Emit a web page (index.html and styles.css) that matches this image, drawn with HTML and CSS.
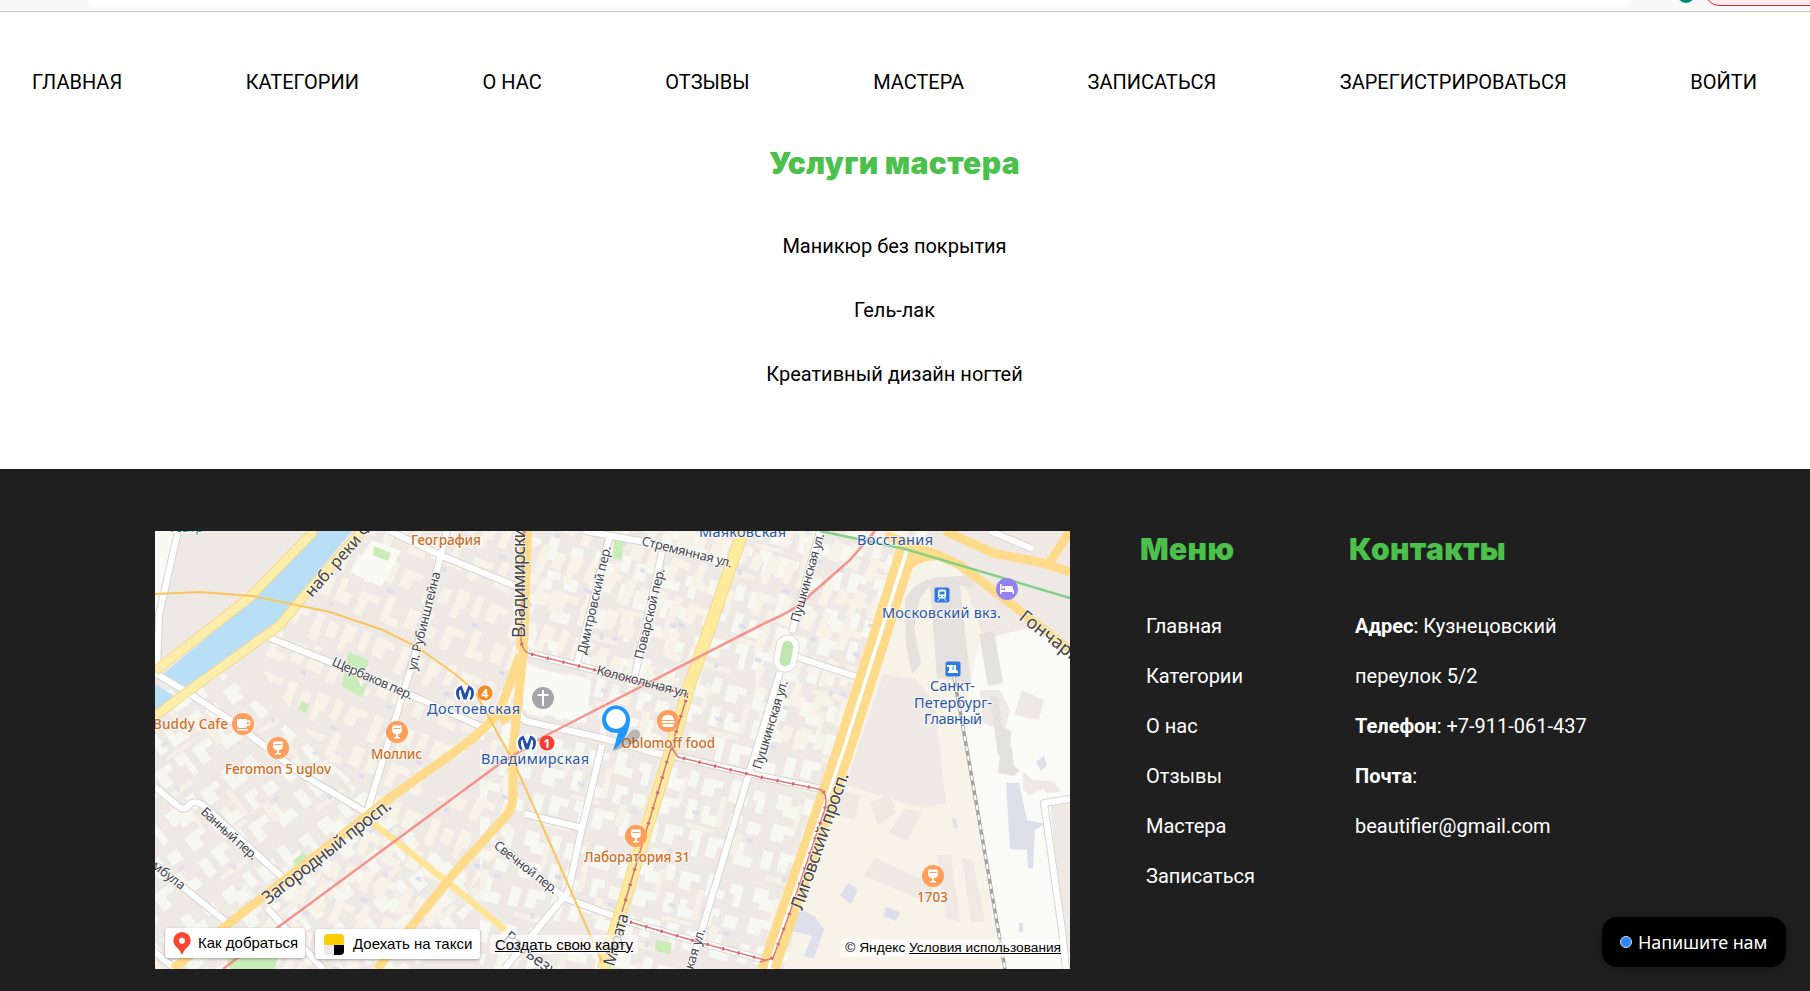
FILE: index.html
```html
<!DOCTYPE html>
<html lang="ru">
<head>
<meta charset="utf-8">
<title>Услуги мастера</title>
<link rel="stylesheet" href="styles.css">
</head>
<body>
<div class="toolbar"><div class="address"></div><div class="avatar"></div><div class="update"></div></div>
<nav class="nav">
<a>Главная</a><a>Категории</a><a>О нас</a><a>Отзывы</a><a>Мастера</a><a>Записаться</a><a>Зарегистрироваться</a><a>Войти</a>
</nav>
<main class="services">
<h1 class="title title-page">Услуги мастера</h1>
<p>Маникюр без покрытия</p>
<p>Гель-лак</p>
<p>Креативный дизайн ногтей</p>
</main>
<footer class="footer">
<div class="map">
<svg class="map-canvas" viewBox="155 531 915 438" width="915" height="438">
<defs>
<pattern id="yards" width="118" height="96" patternUnits="userSpaceOnUse" patternTransform="rotate(14)">
<path fill="#f8f8f3" d="M4 6h14v9h7v12H12v-6H4zM31 4h9v16h-9zM46 8h20v7h-8v10H46zM74 3h10v14h9v9H74zM98 8h12v22h-7V18h-5zM6 36h22v8h-9v9H6zM36 32h9v20h-9zM52 35h7v8h12v10H52zM80 36h13v8h-6v11h-7zM99 40h13v12H99zM3 64h10v19H3zM20 62h18v8h-8v11H20zM45 61h12v26h-6V72h-6zM65 64h21v8H75v12H65zM93 61h8v13h11v11H93z"/>
<path fill="#f7f2e8" d="M25 12h5v26h-5zM67 22h6v30h-6zM38 56h30v4H38zM88 54h8v22h-8zM12 88h34v5H12z"/>
<path fill="#dfdfec" d="M42 42h7v4h-7zM101 56h7v4h-7zM28 85h4v6h-4z"/>
</pattern>
<pattern id="cream" width="92" height="74" patternUnits="userSpaceOnUse" patternTransform="rotate(22)">
<path fill="#f8f3e8" d="M3 4h12v17h-5v12H3zM22 3h8v22h-8zM37 5h20v7h-9v12H37zM64 4h9v28h-9zM79 8h10v16H79zM5 42h20v7H14v17H5zM32 36h8v20h10v8H32zM56 40h12v20H56zM74 36h7v13h8v12H74z"/>
<path fill="#dfdfec" d="M27 30h7v4h-7zM71 64h5v4h-5z"/>
</pattern>
<g id="glass"><circle r="11" fill="#ff9e5a"/><path fill="#fff" d="M-4.500-6.500h9l.4 4.500a4.300 4.300 0 0 1-4 4.200V5H3v1.600H-3V5H-.9V2.200a4.300 4.300 0 0 1-4-4.200z"/><path stroke="#ff9e5a" stroke-width="1" d="M-3.500-3.500h7"/></g>
<g id="metro"><path d="M-6 7C-11 2-9-5-4-7M6 7C11 2 9-5 4-7M-4-7L0 4.500L4-7M-4-7Q-6 1-3 6M4-7Q6 1 3 6" fill="none" stroke="#fff" stroke-width="4"/><path fill="#2450ad" d="M-3.500-7.500L0 1L3.500-7.500Q9-5.500 9-.5Q9 4 6 7L4.500 6Q6.500 3 6-1.500L5-3.500L1.500 6.500H-1.500L-5-3.500L-6-1.500Q-6.500 3-4.500 6L-6 7Q-9 4-9-.5Q-9-5.500-3.500-7.500z"/><path stroke="#fff" stroke-width="1" fill="none" d="M-4.600-3Q-4.500 3-2.500 6.500M4.600-3Q4.500 3 2.500 6.500"/></g>
</defs>
<rect x="155" y="531" width="915" height="438" fill="#efe9e6"/>
<rect x="480" y="531" width="450" height="438" fill="url(#yards)"/>
<path fill="#efe9e6" d="M350 531H520L500 720L380 810L270 640z"/>
<path fill="url(#cream)" d="M350 531H740L690 690L520 650L500 720L380 830L240 640zM320 969L380 820L515 770V830L410 969zM740 531H920L850 750H763z"/>
<g transform="rotate(-50 250 800)"><path fill="url(#yards)" d="M20 660H330V1040H20z" opacity=".9"/></g>
<path fill="#efe9e6" d="M350 531H520L505 710L380 800L275 640z"/>
<path fill="url(#cream)" d="M350 531H520L505 710L380 810L275 640z"/>
<path fill="url(#cream)" d="M373 823L460 892L400 969H215z"/>
<path fill="#fafaf4" d="M350 572l22-32 29 11-20 36zM525 665l66 16-5 42-63-13zM155 531h25l-22 80h-3z"/>
<!-- railway quarter -->
<path fill="#f8f3e8" d="M915 552L960 570L1005 700L1030 969H785L850 750z"/>
<path fill="#fafbf7" d="M980 640L1040 625L1070 650V969H1006L962 722z"/>
<path fill="#efe9e6" d="M883 674L915 679L934 700L946 803L923 808L845 785zM875 858l60 27-6 18-65-27zM937 855h14l9 67-14-4zM962 858l11 2 12 61-14 1zM840 790l20 5-5 25-18-5zM869 802l21-7 6 18-18 12zM905 808l17 5-15 28-19-8zM980 690h20l10 20-6 22-22-10zM1022 690l22 10-5 20-25-5z"/>
<path fill="#e5e1df" d="M905 600Q915 578 945 577L977 575L972 588L960 585L971 683L937 678L930 586L920 598L914 628L921 664L912 674L906 646zM979 634l15-3 9 52-15 3zM990 696l8 1 4 29 9 5-1 21-12 4zM1001 745l11 2 2 19 6 4-6 6-16-3z"/>
<path fill="#efe9e6" d="M1023 771l8 8 24 3 5 10-13 1-4-4-14 6-6-6zM995 531H1070V590L1000 565zM1050 803h20v150h-5z"/>
<path fill="#dfdfeb" d="M1006 783h13l8 37 18 4-10 6-2 39-5-1-1-18-17-1zM1036 762l8-6 3 9-6 6zM840 895l8-12 10 7-7 14zM886 907l14 5-4 9-13-5zM795 905l20 12 9 12-10 30-10-3 8-20-20-5zM952 818l4 1 2 9h-4zM1019 923h4v9h-4z"/>
<path fill="#c9ecb8" d="M348 652l21 8-5 15-18-6zM344 674l12-1 5 14 7-5-6 15-20-10zM614 540l9 2-1 18-10-2zM374 546l17 7-3 8-15-6zM220 936l36 12 27-12-8 33h-45zM293 861l10-9 6 8-14 7zM656 940l16 3-2 11-15-3zM302 701l7 4-3 8-8-4z"/>
<!-- canal -->
<path fill="#b9dff6" d="M317 531H352L293 602L278 621L183 690L163 674L253 599zM155 684L179 699L155 715z"/>
<g fill="none" stroke-linejoin="round">
<path stroke="#d8d4d1" stroke-width="8" d="M178 531L159 615L157 668M155 673L187 692L230 720L303 775L367 813M270 638L330 662L427 702L482 727M447 531L417 648L367 812L375 824M390 531L440 555L518 587M585 531L645 542L728 565M610 535L577 663M662 552L635 675M528 653L595 670L688 695M520 712Q520 720 530 722L602 738L655 753L678 757L765 777L826 790M602 745L582 828L568 892L505 968M525 814L582 828M495 842L565 898L630 922L698 942L765 960M820 531L792 632M780 672L748 777L690 969M797 657L857 677M155 787L178 806Q185 812 190 804Q194 800 203 805L283 878M267 908L323 969M155 865L183 887L230 925M155 952L173 967M1070 799L1044 803L1062 930L1066 969M990 531L1033 549"/>
<path stroke="#fff" stroke-width="6" d="M178 531L159 615L157 668M155 673L187 692L230 720L303 775L367 813M270 638L330 662L427 702L482 727M447 531L417 648L367 812L375 824M390 531L440 555L518 587M585 531L645 542L728 565M610 535L577 663M662 552L635 675M528 653L595 670L688 695M520 712Q520 720 530 722L602 738L655 753L678 757L765 777L826 790M602 745L582 828L568 892L505 968M525 814L582 828M495 842L565 898L630 922L698 942L765 960M820 531L792 632M780 672L748 777L690 969M797 657L857 677M155 787L178 806Q185 812 190 804Q194 800 203 805L283 878M267 908L323 969M155 865L183 887L230 925M155 952L173 967M1070 799L1044 803L1062 930L1066 969M990 531L1033 549"/>
<rect x="778" y="638" width="17" height="31" rx="8.500" fill="#bfe6ae" stroke="#d8d4d1" stroke-width="7" transform="rotate(10 786 653)"/>
<rect x="778" y="638" width="17" height="31" rx="8.500" fill="#bfe6ae" stroke="#fff" stroke-width="5.500" transform="rotate(10 786 653)"/>
<path stroke="#f5d98c" stroke-width="10" d="M314 531L250 597L155 671M362 531L303 597L280 625L187 692L155 716"/>
<path stroke="#fdedab" stroke-width="8" d="M314 531L250 597L155 671M362 531L303 597L280 625L187 692L155 716"/>
<path stroke="#f5d98c" stroke-width="13" d="M743 531L688 690L668 760L603 969"/>
<path stroke="#feea9d" stroke-width="11" d="M743 531L688 690L668 760L603 969"/>
<path stroke="#fee595" stroke-width="6.500" d="M373 823L460 892L505 930"/>
<path stroke="#fff" stroke-width="16" d="M908 548L843 750L768 969"/>
<path stroke="#fddb8b" stroke-width="9" d="M902 545L837 750L762 969M913 552L850 750L775 969"/>
<path stroke="#fddb8b" stroke-width="12" d="M526 531L522 650"/>
<path stroke="#fddb8b" stroke-width="9" d="M524 645L513 750V795Q513 808 506 816L455 872L377 969M520 655L502 705Q495 722 460 748L387 800L227 925L173 969M500 722L513 712"/>
<path stroke="#fddb8b" stroke-width="9" d="M885 535L940 556L960 565L1020 611L1070 650M910 565Q920 554 943 556M945 531L993 553L1043 563L1070 572M1070 531L1050 562"/>
<path stroke="#fac55f" stroke-width="2" d="M155 594L200 592L253 596L330 612L383 630L417 647L455 674Q470 686 475 692L515 765L542 825L602 962"/>
<path stroke="#f28a85" stroke-width="2.500" opacity=".9" d="M223 969L277 928L498 765L545 736L765 623Q800 608 810 595L850 560L875 531"/>
<path stroke="#86cf88" stroke-width="2.500" d="M820 531L905 549L1070 598"/>
<path stroke="#d97a7a" stroke-width="1.500" d="M524 531L521 640Q522 652 531 654L595 670L688 695M686 700L668 758L622 912M672 748L678 757L760 777L818 789Q830 792 824 812L790 912L773 958L760 962M630 922L698 942L765 960"/>
<path stroke="#d06a6e" stroke-width="3.500" stroke-dasharray="2 14" d="M524 531L521 640Q522 652 531 654L595 670L688 695M686 700L668 758L622 912M672 748L678 757L760 777L818 789Q830 792 824 812L790 912L773 958L760 962M630 922L698 942L765 960"/>
<path stroke="#a5a3a2" stroke-width="3.500" d="M954 677L967 750L1005 969"/>
<path stroke="#fff" stroke-width="2" stroke-dasharray="5 5" d="M954 677L967 750L1005 969"/>
</g>
<g class="street">
<text class="embankment" transform="translate(312 598) rotate(-49)">наб. реки Фонтанки</text>
<text textLength="101" transform="translate(416 671) rotate(-76)">ул. Рубинштейна</text>
<text textLength="87" transform="translate(331 665) rotate(23.500)">Щербаков пер.</text>
<text class="avenue" textLength="121" transform="translate(525 638) rotate(-90)">Владимирский</text>
<text textLength="111" transform="translate(586 655) rotate(-77)">Дмитровский пер.</text>
<text textLength="93" transform="translate(643 660) rotate(-76.500)">Поварской пер.</text>
<text textLength="93" transform="translate(641 545) rotate(14)">Стремянная ул.</text>
<text textLength="96" transform="translate(596 674) rotate(14.500)">Колокольная ул.</text>
<text textLength="92" transform="translate(799 623) rotate(-74)">Пушкинская ул.</text>
<text textLength="92" transform="translate(761 770) rotate(-73)">Пушкинская ул.</text>
<text transform="translate(693 970) rotate(-73)">кая ул.</text>
<text class="avenue" transform="translate(1018 619) rotate(38)">Гончарная</text>
<text class="avenue" textLength="144" transform="translate(802 911) rotate(-71)">Лиговский просп.</text>
<text class="avenue" textLength="158" transform="translate(268 905) rotate(-38)">Загородный просп.</text>
<text textLength="71" transform="translate(200 813) rotate(42)">Банный пер.</text>
<text transform="translate(151 867) rotate(38)">мбула</text>
<text textLength="77" transform="translate(493 847) rotate(38)">Свечной пер.</text>
<text class="embankment" transform="translate(503 939) rotate(38)">Разъезжая</text>
<text class="embankment" textLength="54" transform="translate(614 967) rotate(-74)">Марата</text>
</g>
<g class="place">
<text x="411" y="545" textLength="70">География</text><text x="153" y="729" textLength="75">Buddy Cafe</text><text x="225" y="774" textLength="106">Feromon 5 uglov</text><text x="371" y="759" textLength="51">Моллис</text><text x="621" y="748" textLength="94">Oblomoff food</text><text x="584" y="862" textLength="106">Лаборатория 31</text><text x="917" y="902" textLength="31">1703</text>
</g>
<g class="station">
<text x="427" y="714" textLength="93">Достоевская</text><text x="481" y="764" textLength="108">Владимирская</text><text x="699" y="537" textLength="87">Маяковская</text><text x="857" y="545" textLength="76">Восстания</text><text x="882" y="618" textLength="119">Московский вкз.</text><text x="930" y="691" textLength="45">Санкт-</text><text x="914" y="708" textLength="78">Петербург-</text><text x="924" y="724" textLength="58">Главный</text>
</g>
<text class="theatre" x="169" y="532">театр</text>
<use href="#glass" x="278" y="748"/><use href="#glass" x="397" y="732"/><use href="#glass" x="636" y="836"/><use href="#glass" x="933" y="876"/>
<g transform="translate(243 724)"><circle r="11" fill="#ff9e5a"/><path fill="#fff" d="M-6-5H4V1Q4 4 1 4H-3Q-6 4-6 1zM-6 5H5V6.500H-6z"/><path fill="none" stroke="#fff" stroke-width="1.500" d="M4-3H6.500V1H4"/></g>
<g transform="translate(668 721)"><circle r="11" fill="#ff9e5a"/><path fill="#fff" d="M-6-1Q-6-6 0-6T6-1zM-6.500 0h13v2h-13zM-6 3H6Q6 6 3 6H-3Q-6 6-6 3z"/></g>
<g transform="translate(1007 589)"><circle r="11" fill="#9381ef"/><path fill="#fff" d="M-7-5h1.500V1H-2V-3H4Q6-3 6-1V1H7V5H5.500V3H-5.500V5H-7z"/><circle cx="-3.700" cy="-1.500" r="1.400" fill="#fff"/></g>
<g transform="translate(543 698)"><circle r="11" fill="#a3a5a9"/><path stroke="#fff" stroke-width="2" d="M0-8V8M-5.500-3H5.500"/></g>
<use href="#metro" x="465" y="693"/><circle cx="485" cy="693" r="7.500" fill="#f08c26"/><text class="line" x="485" y="697.500">4</text>
<use href="#metro" x="527" y="743"/><circle cx="547" cy="743" r="7.500" fill="#f23d32"/><text class="line" x="547" y="747.500">1</text>
<g transform="translate(942 595)"><rect x="-7.500" y="-7.500" width="15" height="15" rx="2" fill="#2e7be5"/><rect x="-4" y="-5.500" width="8" height="9" rx="2" fill="#fff"/><path fill="#2e7be5" d="M-2.500-3.500h5v3h-5zM-2.500 1h1.500v1h-1.500zM1 1h1.500v1H1z"/><path stroke="#fff" d="M-2.500 3.500L-4 6M2.500 3.500L4 6"/></g>
<g transform="translate(953 669)"><rect x="-7.500" y="-7.500" width="15" height="15" rx="2" fill="#2e7be5"/><path fill="#fff" d="M-6-4H0V-2H-.5V1H.5V-4H3V1H4L5 3V4H-5V2H-4V-2H-6z"/></g>
<path fill="#333" opacity=".28" d="M614 751L632 730Q641 728 640 736Q637 743 628 745z"/>
<path fill="#1e98ff" d="M602 719a14 14.500 0 1 1 28 2Q628 739 613 751L618 733Q602 733 602 719z"/><circle cx="616" cy="719" r="10" fill="#fff"/>
</svg>
<div class="map-button route"><svg width="18" height="23" viewBox="0 0 18 23"><path fill="#ff4433" d="M9 0a8.700 8.700 0 0 0-8.700 8.800C.3 15 7 16 8.300 22h1.400C11 16 17.700 15 17.700 8.800A8.700 8.700 0 0 0 9 0z"/><circle cx="9" cy="8.800" r="3" fill="#fff"/></svg><span>Как добраться</span></div>
<div class="map-button taxi"><i></i><span>Доехать на такси</span></div>
<a class="own-map">Создать свою карту</a>
<div class="copyright">© Яндекс <u>Условия использования</u></div>
</div>
<section class="column menu"><h2 class="title">Меню</h2><p>Главная</p><p>Категории</p><p>О нас</p><p>Отзывы</p><p>Мастера</p><p>Записаться</p></section>
<section class="column"><h2 class="title">Контакты</h2><p><b>Адрес</b>: Кузнецовский<br>переулок 5/2</p><p><b>Телефон</b>: +7-911-061-437</p><p><b>Почта</b>:<br>beautifier@gmail.com</p></section>
</footer>
<div class="chat"><i></i><span>Напишите нам</span></div>
</body>
</html>
```
FILE: styles.css
```css
* { box-sizing: border-box; }
body { margin: 0; width: 1810px; height: 991px; overflow: hidden; background: #fff; color: #000; font: 20px/24px Roboto, sans-serif; }
p { margin: 0; }
.toolbar { position: relative; height: 12px; overflow: hidden; background: #f9f9f9; border-bottom: 1px solid #c4c7c5; }
.address { margin-left: 89px; width: 1541px; height: 7px; background: #fff; border-radius: 0 0 12px 12px; }
.avatar { position: absolute; left: 1677px; top: -15px; width: 18px; height: 18px; border-radius: 50%; background: #00897b; }
.update { position: absolute; left: 1705px; top: -22px; width: 120px; height: 28px; border: 1px solid #d32f2f; border-radius: 14px; background: #fbeceb; }
.nav { display: flex; justify-content: space-between; padding: 58px 53px 0 32px; text-transform: uppercase; }
.title { margin: 0; color: #4bc14b; font: 900 30px/36px Inter, "Open Sans", sans-serif; letter-spacing: .35px; white-space: nowrap; }
.services { display: flex; flex-direction: column; align-items: center; gap: 40px; width: 1789px; height: 375px; padding-top: 51px; }
.title-page { margin-bottom: 13px; }
.footer { display: flex; height: 522px; padding: 62px 0 0 155px; background: #1f1f1f; color: #fff; }
.map { position: relative; width: 915px; height: 438px; overflow: hidden; flex: none; }
.map-canvas { display: block; }
.map-canvas text { font-family: "Noto Sans", sans-serif; paint-order: stroke; stroke: #fff; stroke-opacity: .65; stroke-width: 2px; }
.street { fill: #42464e; font-size: 13px; }
.avenue { font-size: 18px; }
.embankment { font-size: 16.500px; }
.place { fill: #cb7028; font-size: 13.500px; }
.place text { font-weight: 500; }
.station { fill: #2856a6; font-size: 14.500px; }
.theatre { fill: #25998d; font-size: 13px; }
.map-canvas .line { fill: #fff; stroke: none; font-size: 12px; font-weight: 700; text-anchor: middle; }
.map-button { position: absolute; display: flex; align-items: center; height: 30px; border-radius: 3px; background: #fff; box-shadow: 0 1px 3px rgba(0, 0, 0, .35); color: #000; font: 15px/18px "Liberation Sans", sans-serif; white-space: nowrap; }
.route { left: 10px; top: 397px; width: 140px; padding-left: 8px; gap: 7px; }
.taxi { left: 160px; top: 398px; width: 165px; padding-left: 9px; gap: 9px; }
.taxi i { width: 20px; height: 21px; border-radius: 4px; background: conic-gradient(#000 0 0) right bottom / 10px 10px no-repeat, linear-gradient(#fc0 11px, #e8e8e8 11px); }
.own-map, .copyright { position: absolute; border-radius: 3px; background: rgba(255, 255, 255, .65); color: #000; white-space: nowrap; font-family: "Liberation Sans", sans-serif; }
.own-map { left: 335px; top: 404px; padding: 0 5px; font-size: 15px; line-height: 19px; text-decoration: underline; }
.copyright { right: 4px; bottom: 12px; padding: 0 5px; font-size: 13.700px; line-height: 18px; }
.column { padding-left: 5px; line-height: 50px; }
.column .title { margin: 0 0 34px -6px; }
.menu { width: 209px; margin-left: 71px; }
.column:last-child { width: 250px; }
.chat { position: absolute; left: 1602px; top: 917px; display: flex; align-items: center; gap: 6px; width: 184px; height: 50px; padding-left: 18px; border-radius: 15px; background: #000; color: #fff; box-shadow: 0 2px 10px rgba(0, 0, 0, .3); font: 18px/24px "Noto Sans", sans-serif; letter-spacing: -.1px; white-space: nowrap; }
.chat i { width: 12px; height: 12px; border: 1px solid #ddd; border-radius: 50%; background: #2787f5; }
```
